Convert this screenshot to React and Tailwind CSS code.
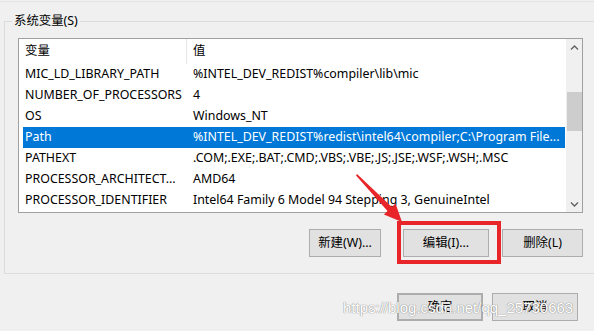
import React from "react";

const rows = [
  ["MIC_LD_LIBRARY_PATH", "%INTEL_DEV_REDIST%compiler\\lib\\mic"],
  ["NUMBER_OF_PROCESSORS", "4"],
  ["OS", "Windows_NT"],
  ["Path", "%INTEL_DEV_REDIST%redist\\intel64\\compiler;C:\\Program File..."],
  ["PATHEXT", ".COM;.EXE;.BAT;.CMD;.VBS;.VBE;.JS;.JSE;.WSF;.WSH;.MSC"],
  ["PROCESSOR_ARCHITECT...", "AMD64"],
  ["PROCESSOR_IDENTIFIER", "Intel64 Family 6 Model 94 Stepping 3, GenuineIntel"],
];

function Chevron({ down }) {
  return (
    <svg width="9" height="6" viewBox="0 0 9 6" className="text-[#606060]">
      <path
        d={down ? "M1 1.5 L4.5 5 L8 1.5" : "M1 4.5 L4.5 1 L8 4.5"}
        fill="none"
        stroke="currentColor"
        strokeWidth="1.3"
      />
    </svg>
  );
}

function Button({ children, className = "" }) {
  return (
    <div
      className={`h-[28px] flex items-center justify-center bg-[#e1e1e1] border border-[#adadad] text-black ${className}`}
    >
      {children}
    </div>
  );
}

export default function App() {
  return (
    <div
      className="relative w-[594px] h-[331px] bg-[#f0f0f0] overflow-hidden text-[12.4px] text-black"
      style={{ fontFamily: '"Noto Sans", "Noto Sans CJK SC", sans-serif' }}
    >
      {/* faint line left over from the section above */}
      <div className="h-[2px] border-b border-[#e3e3e3]" />

      {/* 系统变量 group box */}
      <fieldset className="ml-[4px] mt-[12px] w-[600px] h-[260px] border border-[#dcdcdc]">
        <legend className="ml-[7px] px-[2px] leading-[14px]">系统变量(S)</legend>

        {/* list view */}
        <div className="ml-[13px] mt-[10px] w-[565px] h-[175px] border border-[#a0a0a0] bg-white flex">
          <div className="flex-1 flex flex-col">
            {/* header */}
            <div className="h-[25px] flex items-center">
              <div className="w-[168px] pl-[6px] h-full flex items-center border-r border-[#e5e5e5]">变量</div>
              <div className="pl-[6px]">值</div>
            </div>
            {rows.map(([name, value]) => {
              const sel = name === "Path";
              return (
                <div
                  key={name}
                  className={`ml-[4px] mr-[1px] h-[21px] flex items-center whitespace-nowrap ${
                    sel ? "bg-[#0078d7] text-white" : ""
                  }`}
                >
                  <div className="w-[168px] pl-[2px]">{name}</div>
                  <div className="pl-[2px]">{value}</div>
                </div>
              );
            })}
          </div>

          {/* scrollbar */}
          <div className="w-[16px] bg-[#f0f0f0] flex flex-col items-center">
            <div className="h-[17px] flex items-center justify-center">
              <Chevron />
            </div>
            <div className="mt-[36px] w-[15px] h-[39px] bg-[#cdcdcd]" />
            <div className="flex-1" />
            <div className="h-[17px] flex items-center justify-center">
              <Chevron down />
            </div>
          </div>
        </div>

        {/* action buttons */}
        <div className="mt-[16px] flex">
          <Button className="ml-[304px] w-[72px]">新建(W)...</Button>
          <Button className="ml-[22px] w-[86px]">编辑(I)...</Button>
          <Button className="ml-[13px] w-[81px]">删除(L)</Button>
        </div>
      </fieldset>

      {/* dialog buttons */}
      <div className="mt-[19px] flex">
        <Button className="ml-[397px] w-[86px] border-2 border-[#0078d7]">确定</Button>
        <Button className="ml-[9px] w-[86px]">取消</Button>
      </div>

      {/* annotation: red box + arrow */}
      <div className="absolute left-[397px] top-[221px] w-[104px] h-[43px] border-4 border-[#e8262a]" />
      <svg className="absolute left-0 top-0" width="594" height="331">
        <polygon
          points="357,174 391.9,206.9 395.5,203.4 402,222 383.9,214.4 387.5,211 356,175.5"
          fill="#e8262a"
        />
      </svg>

      {/* watermark */}
      <div
        className="absolute left-[343px] top-[297px] text-[15px] text-white [text-shadow:0_0_1px_#8a8a8a,0_0_1px_#8a8a8a]"
        style={{ fontFamily: '"Liberation Sans", sans-serif' }}
      >
        https://blog.csdn.net/qq_25730663
      </div>
    </div>
  );
}
